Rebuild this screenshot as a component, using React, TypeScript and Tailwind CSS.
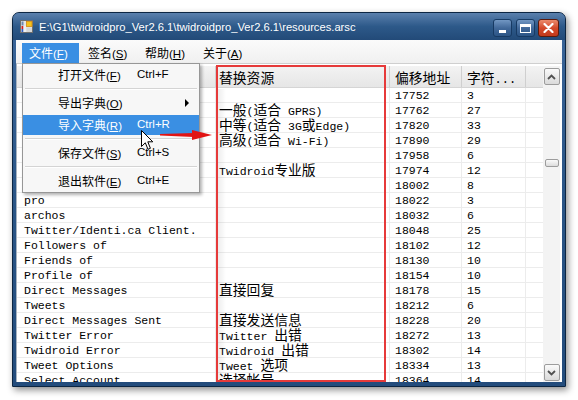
import React from "react";

const CJK = /[\u3000-\u9fff\uff00-\uffef]/;

function Mixed({ text, cjk }: { text: string; cjk: string }) {
  const parts: { s: string; c: boolean }[] = [];
  for (const ch of text) {
    const c = CJK.test(ch);
    if (parts.length && parts[parts.length - 1].c === c) parts[parts.length - 1].s += ch;
    else parts.push({ s: ch, c });
  }
  return (
    <span className="whitespace-pre leading-[14px]">
      {parts.map((p, i) =>
        p.c ? (
          <span key={i} className={cjk}>
            {p.s}
          </span>
        ) : (
          <span key={i}>{p.s}</span>
        )
      )}
    </span>
  );
}

const rows: [string, string, string, string][] = [
  ["Twidroid", "", "17752", "3"],
  ["Low (for GPRS)", "一般(适合 GPRS)", "17762", "27"],
  ["Medium (3G or Edge)", "中等(适合 3G或Edge)", "17820", "33"],
  ["High (for Wi-Fi)", "高级(适合 Wi-Fi)", "17890", "29"],
  ["Twidroid", "", "17958", "6"],
  ["Twidroid Pro", "Twidroid专业版", "17974", "12"],
  ["Settings", "", "18002", "8"],
  ["pro", "", "18022", "3"],
  ["archos", "", "18032", "6"],
  ["Twitter/Identi.ca Client.", "", "18048", "25"],
  ["Followers of", "", "18102", "12"],
  ["Friends of", "", "18130", "10"],
  ["Profile of", "", "18154", "10"],
  ["Direct Messages", "直接回复", "18178", "15"],
  ["Tweets", "", "18212", "6"],
  ["Direct Messages Sent", "直接发送信息", "18228", "20"],
  ["Twitter Error", "Twitter 出错", "18272", "13"],
  ["Twidroid Error", "Twidroid 出错", "18302", "14"],
  ["Tweet Options", "Tweet 选项", "18334", "13"],
  ["Select Account", "选择帐号", "18364", "14"],
];

const cellFont = "font-['Liberation_Mono','Noto_Sans_CJK_SC',monospace] text-[11.5px] text-black";
const cjkCell = "font-['Noto_Sans_CJK_SC',sans-serif] text-[13.8px] leading-[12px]";

function MenuLabel({ zh, key1, white }: { zh: string; key1: string; white?: boolean }) {
  return (
    <span className={`whitespace-nowrap leading-[14px] ${white ? "text-white" : "text-black"}`}>
      <span className="font-['Noto_Sans_CJK_SC',sans-serif] text-[12px]">{zh}</span>
      <span className="font-['Liberation_Sans',sans-serif] text-[11.5px]">
        (<span className="underline">{key1}</span>)
      </span>
    </span>
  );
}

function MenuItem({
  zh,
  k,
  sc,
  hi,
  arrow,
}: {
  zh: string;
  k: string;
  sc?: string;
  hi?: boolean;
  arrow?: boolean;
}) {
  return (
    <div className="h-[22px] flex items-center">
      <div className={`h-[20px] w-full flex items-center relative ${hi ? "bg-[#3a8fe3]" : ""}`}>
        <div className="w-[114px] pl-[35px] flex items-center">
          <MenuLabel zh={zh} key1={k} white={hi} />
        </div>
        {sc && (
          <span
            className={`font-['Liberation_Sans',sans-serif] text-[11.5px] ${hi ? "text-white" : "text-black"}`}
          >
            {sc}
          </span>
        )}
        {arrow && (
          <svg className="absolute left-[162px] top-[6px]" width="5" height="8" viewBox="0 0 5 8">
            <polygon points="0,0 4,4 0,8" fill="#000" />
          </svg>
        )}
      </div>
    </div>
  );
}

function Sep() {
  return (
    <div className="h-[6px] flex items-center px-[2px]">
      <div className="w-full h-[2px] border-t border-[#d4d4d4] border-b-white border-b" />
    </div>
  );
}

function ScrollBtn({ up }: { up?: boolean }) {
  return (
    <div className="h-[17px] w-[16px] mx-auto rounded-[2px] border border-[#9c9c9c] bg-gradient-to-b from-[#fafafa] to-[#dadada] flex items-center justify-center">
      <svg width="9" height="6" viewBox="0 0 9 6">
        {up ? (
          <polyline points="1,5 4.5,1.5 8,5" fill="none" stroke="#505050" strokeWidth="1.8" />
        ) : (
          <polyline points="1,1 4.5,4.5 8,1" fill="none" stroke="#505050" strokeWidth="1.8" />
        )}
      </svg>
    </div>
  );
}

export default function App() {
  return (
    <div className="w-[578px] h-[400px] bg-white relative overflow-hidden">
      {/* window */}
      <div className="ml-[12px] mt-[12px] w-[554px] h-[375px] flex flex-col rounded-t-[7px] border border-[#0c2643] bg-gradient-to-b from-[#3b669a] via-[#2a5586] to-[#234c7c] shadow-[2px_3px_7px_rgba(0,0,0,0.45)]">
        {/* title bar */}
        <div className="h-[27px] flex items-start rounded-t-[6px] bg-gradient-to-b from-[#5a80ad] via-[#2d5989] to-[#224a78]">
          <div className="flex items-center h-[27px] pl-[7px]">
            <svg width="13" height="13" viewBox="0 0 13 13">
              <rect x="0.5" y="0.5" width="12" height="12" fill="#e6e6e6" stroke="#6f6f6f" />
              <rect x="1.5" y="1.5" width="2" height="4" fill="#6d87b0" />
              <rect x="1.5" y="6" width="2" height="3" fill="#d42020" />
              <rect x="1.5" y="9" width="2" height="3" fill="#2f5fc4" />
              <rect x="3.5" y="6" width="2.5" height="6" fill="#f0f0f0" />
              <rect x="6.5" y="1.5" width="5.5" height="5" fill="#f4c21c" stroke="#d48a10" strokeWidth="0.8" />
              <rect x="6.5" y="7.5" width="5.5" height="4.5" fill="#d8d8d8" />
            </svg>
            <span className="ml-[6px] text-white font-['Liberation_Sans',sans-serif] text-[11.2px] leading-[16px] whitespace-nowrap">
              {"E:\\G1\\twidroidpro_Ver2.6.1\\twidroidpro_Ver2.6.1\\resources.arsc"}
            </span>
          </div>
          <div className="ml-auto mt-[6px] pr-[6px] flex">
            <div className="w-[19px] h-[18px] rounded-[3px] border border-[#173a63] bg-gradient-to-b from-[#7297c3] via-[#42699a] to-[#2b5586] flex items-end justify-center pb-[3px]">
              <div className="w-[7px] h-[3px] bg-white" />
            </div>
            <div className="ml-[4px] w-[19px] h-[18px] rounded-[3px] border border-[#173a63] bg-gradient-to-b from-[#7297c3] via-[#42699a] to-[#2b5586] flex items-center justify-center">
              <div className="w-[11px] h-[9px] border border-white border-t-[3px]" />
            </div>
            <div className="ml-[3px] w-[21px] h-[18px] rounded-[3px] border border-[#5a1a0c] bg-gradient-to-b from-[#eb8a6c] via-[#d4492a] to-[#c23a1c] flex items-center justify-center">
              <svg width="11" height="10" viewBox="0 0 11 10">
                <path d="M1.5 1 L9.5 9 M9.5 1 L1.5 9" stroke="#fff" strokeWidth="2.2" strokeLinecap="round" />
              </svg>
            </div>
          </div>
        </div>

        {/* client */}
        <div className="flex-1 mx-[3px] mb-[4px] bg-white flex flex-col min-h-0">
          {/* menubar */}
          <div className="h-[23px] pt-[3px] pl-[6px] flex bg-gradient-to-b from-[#fbfbfb] to-[#f0f0f0]">
            <div className="w-[57px] h-[20px] bg-[#3a8fe3] pl-[7px] flex items-center">
              <MenuLabel zh="文件" key1="F" white />
            </div>
            <div className="w-[58px] h-[20px] pl-[9px] flex items-center">
              <MenuLabel zh="签名" key1="S" />
            </div>
            <div className="w-[58px] h-[20px] pl-[8px] flex items-center">
              <MenuLabel zh="帮助" key1="H" />
            </div>
            <div className="w-[58px] h-[20px] pl-[8px] flex items-center">
              <MenuLabel zh="关于" key1="A" />
            </div>
          </div>

          {/* list view */}
          <div className="flex-1 min-h-0 flex border-t border-[#cfcfcf] pt-[2px] border-l border-l-[#a9b3bf] pr-[2px]">
            <div className="w-[526px] flex flex-col min-h-0 overflow-hidden">
              {/* header */}
              <div className="h-[22px] shrink-0 flex bg-gradient-to-b from-[#f3f3f3] to-[#e6e6e6] border-b border-[#d5d5d5]">
                <div className="w-[199px] border-r border-[#cfcfcf]" />
                <div className="w-[174px] border-r border-[#cfcfcf] pl-[3px] pt-[1px] flex items-center font-['Noto_Sans_CJK_SC',sans-serif] text-[13.8px] text-black">
                  替换资源
                </div>
                <div className="w-[72px] border-r border-[#cfcfcf] pl-[5px] pt-[1px] flex items-center font-['Noto_Sans_CJK_SC',sans-serif] text-[13.8px] text-black">
                  偏移地址
                </div>
                <div className="w-[64px] border-r border-[#cfcfcf] pl-[5px] pt-[1px] flex items-center text-black">
                  <span className="whitespace-nowrap">
                    <span className="font-['Noto_Sans_CJK_SC',sans-serif] text-[13.8px]">字符</span>
                    <span className="font-['Liberation_Mono',monospace] text-[12px]">...</span>
                  </span>
                </div>
                <div className="w-[17px]" />
              </div>
              {/* rows */}
              <div className="flex-1 min-h-0 overflow-hidden">
                {rows.map((r, i) => (
                  <div key={i} className={`h-[15px] flex border-b border-[#ececec] ${cellFont} leading-[14px]`}>
                    <div className="w-[199px] border-r border-[#ececec] pl-[7px] pt-[1px] whitespace-nowrap flex items-center">
                      <Mixed text={r[0]} cjk={cjkCell} />
                    </div>
                    <div className="w-[174px] border-r border-[#ececec] pl-[3px] pt-[1px] whitespace-nowrap flex items-center">
                      <Mixed text={r[1]} cjk={cjkCell} />
                    </div>
                    <div className="w-[72px] border-r border-[#ececec] pl-[5px] pt-[1px] flex items-center">{r[2]}</div>
                    <div className="w-[64px] border-r border-[#ececec] pl-[5px] pt-[1px] flex items-center">{r[3]}</div>
                    <div className="w-[17px]" />
                  </div>
                ))}
              </div>
            </div>
            {/* scrollbar */}
            <div className="w-[17px] flex flex-col bg-[#f3f3f3] pt-[2px] pb-[1px]">
              <ScrollBtn up />
              <div className="h-[74px]" />
              <div className="h-[8px] w-[14px] mx-auto rounded-[2px] border border-[#9c9c9c] bg-gradient-to-b from-[#fafafa] to-[#dcdcdc]" />
              <div className="flex-1" />
              <ScrollBtn />
            </div>
          </div>
        </div>
      </div>

      {/* red annotation rectangle */}
      <div className="absolute left-[216px] top-[65px] w-[170px] h-[317px] border-2 border-[#e63a3a] pointer-events-none">
        <div className="absolute left-0 top-[22px] bottom-0 w-[8px] bg-gradient-to-r from-[rgba(0,0,0,0.07)] to-transparent" />
      </div>

      {/* dropdown menu */}
      <div className="absolute left-[22px] top-[63px] w-[178px] h-[130px] bg-[#f7f7f7] border border-[#979797] shadow-[2px_2px_3px_rgba(0,0,0,0.3)]">
        <MenuItem zh="打开文件" k="F" sc="Ctrl+F" />
        <Sep />
        <MenuItem zh="导出字典" k="O" arrow />
        <MenuItem zh="导入字典" k="R" sc="Ctrl+R" hi />
        <Sep />
        <MenuItem zh="保存文件" k="S" sc="Ctrl+S" />
        <Sep />
        <MenuItem zh="退出软件" k="E" sc="Ctrl+E" />
      </div>

      {/* red arrow */}
      <svg className="absolute left-[158px] top-[128px]" width="58" height="14" viewBox="0 0 58 14">
        <polygon points="2,6 36,5 36,9 2,7.6" fill="#e21414" />
        <polygon points="34,2 54,7 34,12" fill="#e21414" />
      </svg>

      {/* mouse cursor */}
      <svg className="absolute left-[141px] top-[130px]" width="13" height="21" viewBox="0 0 13 21">
        <path
          d="M0.5 0.5 L0.5 16.5 L4.3 12.8 L7 19.3 L9.4 18.3 L6.8 11.8 L11.8 11.8 Z"
          fill="#fff"
          stroke="#000"
          strokeWidth="1"
          strokeLinejoin="miter"
        />
      </svg>
    </div>
  );
}
